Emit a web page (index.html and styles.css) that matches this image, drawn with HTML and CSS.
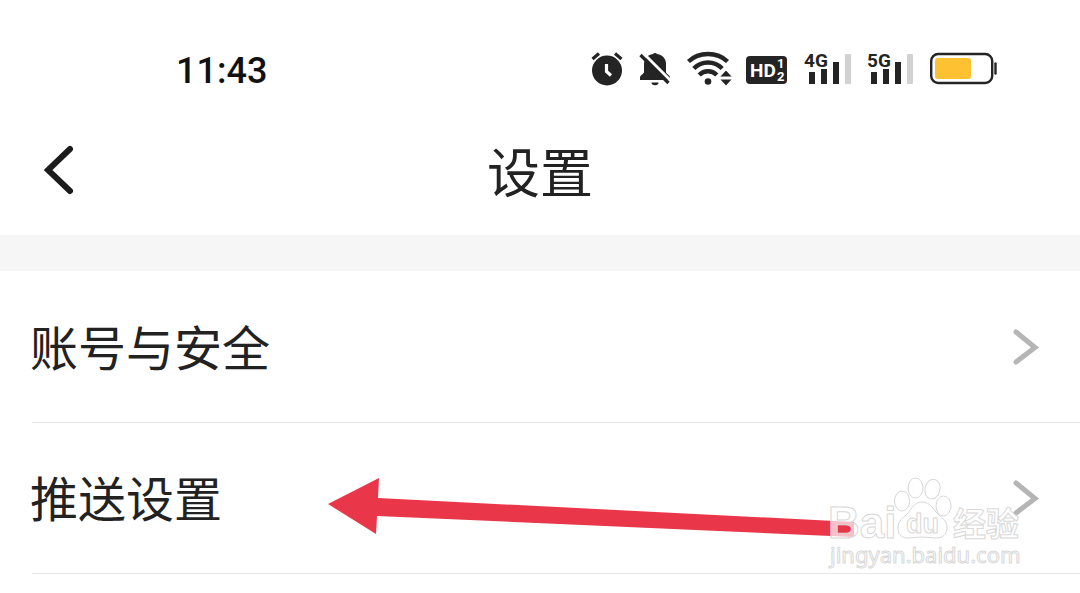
FILE: index.html
```html
<!DOCTYPE html>
<html lang="zh-CN">
<head>
  <meta charset="UTF-8">
  <meta name="viewport" content="width=device-width, initial-scale=1.0">
  <title>设置</title>
  <link rel="stylesheet" href="styles.css">
</head>
<body>

<!-- 状态栏 -->
<div class="status-bar">
  <span class="time">11:43</span>
  <div class="status-icons">
    <svg width="34" height="38" viewBox="0 0 34 38" role="img" aria-label="闹钟">
      <circle cx="17" cy="20.5" r="15" fill="#242424"/>
      <path d="M2.5 9L9 3.5M31.5 9L25 3.5" stroke="#242424" stroke-width="3.2" fill="none"/>
      <path d="M16.5 14v7.5l4.5 4" stroke="#fff" stroke-width="3.2" fill="none"/>
    </svg>
    <svg width="32" height="38" viewBox="0 0 32 38" role="img" aria-label="静音">
      <path d="M14 4a2.5 2.5 0 0 1 4 0c6 1 9 5 9 10v8c0 2 4 3 4 5.5V30H1v-2.500c0-2.500 4-3.500 4-5.500v-8C5 9 8 5 14 4z" fill="#242424"/>
      <path d="M12.5 32.5h7a3.5 2.800 0 0 1-7 0z" fill="#242424"/>
      <path d="M4.5 3.5l28 28" stroke="#fff" stroke-width="3"/>
      <path d="M1.5 5l28 28" stroke="#242424" stroke-width="3.2"/>
    </svg>
    <svg width="46" height="38" viewBox="0 0 46 38" role="img" aria-label="无线网络">
      <path d="M2.5 11.500c10.500-10 28.500-10 39 0M7.800 18.500c8-8 20.400-8 28.400 0M13.200 25c5-5 12.600-5 17.600 0" stroke="#242424" stroke-width="4.4" fill="none"/>
      <circle cx="22" cy="31.5" r="3.3" fill="#242424"/>
      <path d="M33.500 27L40 20l6.500 7z" fill="#242424" stroke="#fff" stroke-width="1"/>
      <path d="M34.500 29.500h11L40 35.500z" fill="#242424"/>
    </svg>
    <svg width="41" height="38" viewBox="0 0 41 38" role="img" aria-label="HD">
      <rect x="-1" y="6" width="41" height="28" rx="4" fill="#242424"/>
      <text class="hd" x="3" y="27">HD</text>
      <text class="hd-num" x="30" y="18">1</text>
      <text class="hd-num" x="30" y="31">2</text>
    </svg>
    <svg width="49" height="38" viewBox="0 0 49 38" role="img" aria-label="4G">
      <text class="net" x="1" y="17">4G</text>
      <path d="M9 22v12M21 19v15M33 12v22" class="bars"/>
      <rect x="42" y="4" width="6" height="30" rx="1" fill="#d2d2d2"/>
    </svg>
    <svg width="48" height="38" viewBox="0 0 48 38" role="img" aria-label="5G">
      <text class="net" x="0" y="17">5G</text>
      <path d="M7 22v12M19 19v15M31 12v22" class="bars"/>
      <rect x="40" y="4" width="6" height="30" rx="1" fill="#d2d2d2"/>
    </svg>
    <svg width="68" height="38" viewBox="0 0 68 38" role="img" aria-label="电量">
      <rect x="1.2" y="4" width="61" height="29" rx="7" fill="#fff" stroke="#242424" stroke-width="2.4"/>
      <rect x="5" y="8" width="36" height="21" rx="3" fill="#fec132"/>
      <path d="M65.5 13.5v10" stroke="#242424" stroke-width="2.4" stroke-linecap="round"/>
    </svg>
  </div>
</div>

<!-- 标题栏 -->
<header class="nav-bar">
  <button class="back" type="button" aria-label="返回">
    <svg width="32" height="52" viewBox="0 0 32 52">
      <path d="M26 5L4 26l22 21" fill="none" stroke="#1c1c1c" stroke-width="6" stroke-linecap="round"/>
    </svg>
  </button>
  <h1 class="title">设置</h1>
</header>

<!-- 设置列表 -->
<main class="settings">
  <a class="item" href="#account">
    <span class="label">账号与安全</span>
    <svg width="28" height="40" viewBox="0 0 28 40">
      <path d="M4 5l19 15.500L4 35" fill="none" stroke="#b5b5b5" stroke-width="5" stroke-linecap="round"/>
    </svg>
  </a>
  <a class="item" href="#push">
    <span class="label">推送设置</span>
    <svg width="28" height="40" viewBox="0 0 28 40">
      <path d="M4 5l19 15.500L4 35" fill="none" stroke="#b5b5b5" stroke-width="5" stroke-linecap="round"/>
    </svg>
    <!-- 红色箭头 -->
    <svg class="arrow" width="530" height="60" viewBox="0 0 530 60">
      <path d="M0 27L51 1l-1 20 476 24v15L49 39l-1 18z" fill="#e93649"/>
    </svg>
    <!-- 水印 -->
    <svg class="watermark" width="210" height="104" viewBox="0 0 210 104">
      <text class="mark mark-logo" x="6" y="65">Bai</text>
      <g class="mark">
        <ellipse cx="80" cy="28" rx="7.5" ry="10"/>
        <ellipse cx="93.5" cy="15" rx="7.5" ry="10"/>
        <ellipse cx="110.5" cy="16" rx="7.5" ry="10" transform="rotate(12 110 16)"/>
        <ellipse cx="121.5" cy="33" rx="7.5" ry="10"/>
        <path d="M100 29c9 0 11 8 17 13 5 4 8 7 8 13 0 7-5 10-11 10-5 0-9-1-14-1s-9 1-14 1c-7 0-10-4-10-10s3-9 7-12c6-5 8-14 17-14z"/>
      </g>
      <text class="mark mark-du" x="84" y="60">du</text>
      <text class="mark mark-cn" x="131" y="63">经验</text>
      <text class="mark mark-url" x="8" y="90">jingyan.baidu.com</text>
    </svg>
  </a>
</main>

</body>
</html>
```
FILE: styles.css
```css
* {
  box-sizing: border-box;
}
body {
  margin: 0;
  background: #fff;
  color: #222;
  font-family: "Noto Sans CJK SC", "Noto Sans", sans-serif;
  overflow-x: hidden;
}
/* 状态栏 */
.status-bar {
  display: flex;
  justify-content: space-between;
  align-items: flex-start;
  padding: 50px 82px 16px 176px;
}
.time {
  font-family: Roboto, sans-serif;
  font-size: 36px;
  font-weight: 500;
  line-height: 42px;
  color: #111;
}
.status-icons {
  display: flex;
  gap: 15px;
}
.status-icons svg {
  overflow: visible;
}
.status-icons text {
  font-family: Roboto, sans-serif;
  font-weight: 700;
}
.hd {
  font-size: 19px;
  fill: #fff;
}
.hd-num {
  font-size: 13px;
  fill: #fff;
}
.net {
  font-size: 19px;
  fill: #242424;
}
.bars {
  stroke: #242424;
  stroke-width: 6;
}
/* 标题栏 */
.nav-bar {
  display: grid;
  grid-template-columns: 60px 1fr 60px;
  align-items: center;
  height: 127px;
  padding: 0 44px 4px;
}
.back {
  display: flex;
  padding: 0;
  border: none;
  background: none;
  cursor: pointer;
}
.title {
  margin: 0;
  text-align: center;
  font-size: 53px;
  font-weight: 400;
  line-height: 64px;
}
/* 设置列表 */
.settings {
  padding-top: 1px;
  border-top: 36px solid #f6f6f6;
}
.item {
  position: relative;
  display: flex;
  justify-content: space-between;
  align-items: center;
  margin-left: 32px;
  padding: 40px 40px 40px 0;
  border-bottom: 1px solid #e6e6e6;
  color: #222;
  font-size: 48px;
  line-height: 66px;
  text-decoration: none;
}
.label {
  margin-left: -2px;
  padding-bottom: 4px;
}
/* 箭头与水印浮在列表项上方 */
.arrow {
  position: absolute;
  left: 296px;
  top: 54px;
}
.watermark {
  position: absolute;
  right: 48px;
  top: 50px;
}
.mark {
  fill: rgba(255, 255, 255, 0.7);
  stroke: #d8d8d8;
  stroke-width: 1;
}
.mark-logo {
  font-family: "Liberation Sans", sans-serif;
  font-size: 44px;
  font-weight: 700;
}
.mark-du {
  font-family: "Liberation Sans", sans-serif;
  font-size: 27px;
  font-weight: 700;
}
.mark-cn {
  font-size: 33px;
  font-weight: 700;
}
.mark-url {
  font-family: "Noto Sans", sans-serif;
  font-size: 22px;
}
```
